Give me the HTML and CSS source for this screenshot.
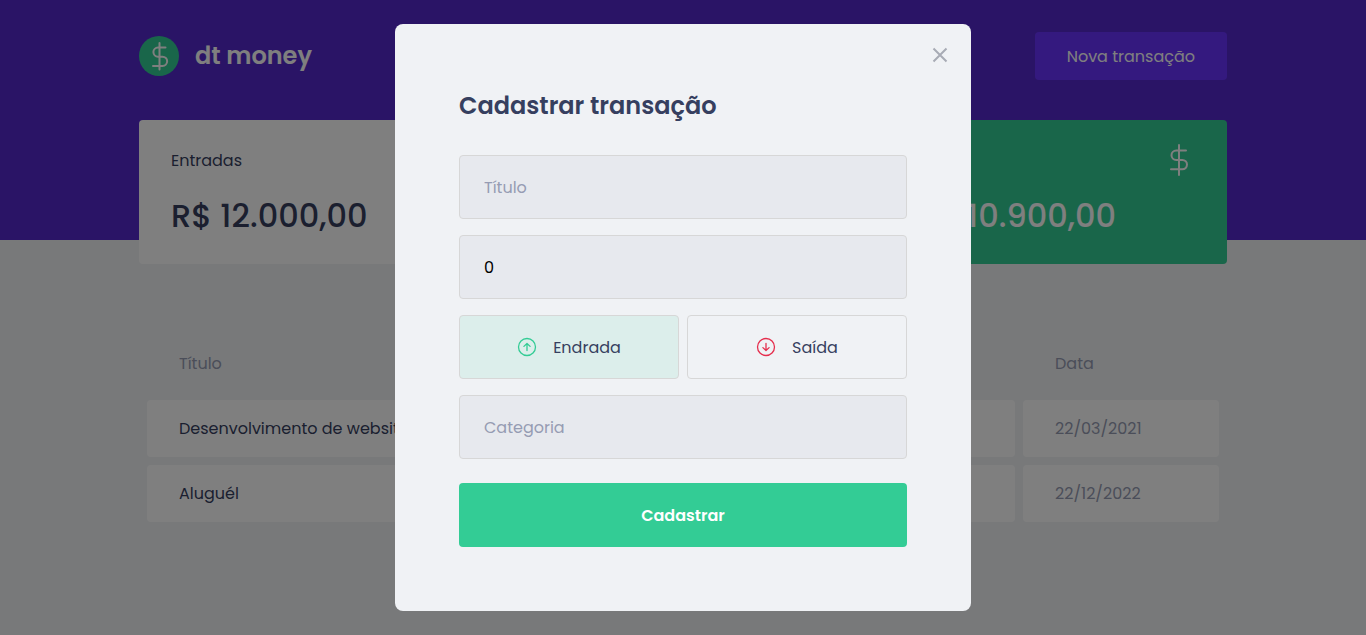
FILE: index.html
```html
<!DOCTYPE html>
<html lang="pt-BR">
<head>
<meta charset="utf-8">
<meta name="viewport" content="width=device-width, initial-scale=1">
<title>dt money</title>
<link rel="stylesheet" href="styles.css">
</head>
<body>
<header class="header">
  <div class="container header-content">
    <div class="logo">
      <svg class="logo-mark" viewBox="0 0 40 40" aria-hidden="true">
        <circle cx="20" cy="20" r="20" fill="#33cc95"/>
        <path d="M20.500 7v26.500M26.500 11.500h-7.500a4.600 4.600 0 0 0 0 9.200h4.500a4.650 4.650 0 0 1 0 9.300h-9.500" fill="none" stroke="#fff" stroke-width="2" stroke-linecap="round"/>
      </svg>
      <span class="logo-name">dt money</span>
    </div>
    <button type="button" class="new-button">Nova transação</button>
  </div>
</header>
<main class="container">
  <section class="summary">
    <article class="card">
      <header class="card-header"><p>Entradas</p></header>
      <strong class="amount">R$ 12.000,00</strong>
    </article>
    <article class="card"></article>
    <article class="card card-total">
      <header class="card-header">
        <p>Total</p>
        <svg class="card-icon" viewBox="0 0 32 32" fill="none" stroke="#fff" stroke-width="2" stroke-linecap="round" aria-hidden="true">
          <path d="M16 1v30M23 6.500h-9.800a4.700 4.700 0 0 0 0 9.400h6.100a4.700 4.700 0 0 1 0 9.400H8"/>
        </svg>
      </header>
      <strong class="amount">R$ 10.900,00</strong>
    </article>
  </section>
  <table class="transactions">
    <thead>
      <tr><th class="col-title">Título</th><th class="col-value"></th><th></th><th class="col-date">Data</th></tr>
    </thead>
    <tbody>
      <tr><td class="title">Desenvolvimento de website</td><td></td><td></td><td>22/03/2021</td></tr>
      <tr><td class="title">Aluguél</td><td></td><td></td><td>22/12/2022</td></tr>
    </tbody>
  </table>
</main>
<div class="overlay">
  <div class="modal" role="dialog" aria-modal="true" aria-labelledby="modal-title">
    <button type="button" class="close" aria-label="Fechar">
      <svg viewBox="0 0 24 24" width="24" height="24" fill="none" stroke="#a8abb5" stroke-width="2" aria-hidden="true"><path d="M5.500 5.500l13 13M18.500 5.500l-13 13"/></svg>
    </button>
    <form class="form">
      <h2 class="modal-title" id="modal-title">Cadastrar transação</h2>
      <input class="field" type="text" placeholder="Título" aria-label="Título">
      <input class="field" type="text" inputmode="decimal" value="0" aria-label="Valor">
      <div class="types">
        <button type="button" class="type type-income" aria-pressed="true">
          <svg class="type-icon" viewBox="0 0 20 20" fill="none" stroke="#33cc95" stroke-width="1.300" stroke-linecap="round" stroke-linejoin="round" aria-hidden="true"><circle cx="10" cy="10" r="8.500"/><path d="M10 13.500V6.700M6.900 9.400L10 6.500l3.100 2.900"/></svg>
          <span>Endrada</span>
        </button>
        <button type="button" class="type" aria-pressed="false">
          <svg class="type-icon" viewBox="0 0 20 20" fill="none" stroke="#e52e4d" stroke-width="1.300" stroke-linecap="round" stroke-linejoin="round" aria-hidden="true"><circle cx="10" cy="10" r="8.500"/><path d="M10 6.500v6.800M6.900 10.600l3.100 2.900 3.100-2.900"/></svg>
          <span>Saída</span>
        </button>
      </div>
      <input class="field" type="text" placeholder="Categoria" aria-label="Categoria">
      <button type="submit" class="submit">Cadastrar</button>
    </form>
  </div>
</div>
</body>
</html>
```
FILE: styles.css
```css
* {
  box-sizing: border-box;
  margin: 0;
  padding: 0;
}

body {
  background: #f0f2f5;
  color: #363f5f;
}

body, button, input {
  font-family: Poppins, Inter, "Open Sans", sans-serif;
  font-size: 16px;
  font-weight: 400;
  line-height: 25px;
}

button {
  border: 0;
  border-radius: 4px;
  cursor: pointer;
}

.container {
  max-width: 1120px;
  margin: 0 auto;
  padding: 0 16px;
}

.header {
  background: #5429cc;
  padding: 32px 0 160px;
}

.header-content {
  display: flex;
  align-items: center;
  justify-content: space-between;
}

.logo {
  display: flex;
  align-items: center;
  gap: 16px;
}

.logo-mark {
  width: 40px;
  height: 40px;
}

.logo-name {
  color: #fff;
  font-size: 24px;
  font-weight: 600;
  line-height: 32px;
}

.new-button {
  height: 48px;
  padding: 0 32px;
  background: #6933ff;
  color: #fff;
}

.summary {
  display: grid;
  grid-template-columns: repeat(3, 1fr);
  gap: 32px;
  margin-top: -120px;
}

.card {
  padding: 24px 32px;
  border-radius: 4px;
  background: #fff;
}

.card-total {
  background: #33cc95;
  color: #fff;
}

.card-header {
  display: flex;
  align-items: center;
  justify-content: space-between;
  min-height: 32px;
}

.card-icon {
  width: 32px;
  height: 32px;
}

.amount {
  display: block;
  margin-top: 16px;
  font-size: 32px;
  font-weight: 500;
  line-height: 48px;
}

.transactions {
  width: 100%;
  margin-top: 64px;
  border-spacing: 8px;
}

.transactions th {
  padding: 16px 32px;
  color: #969cb3;
  font-weight: 400;
  line-height: 24px;
  text-align: left;
}

.transactions td {
  padding: 16px 32px;
  border-radius: 4px;
  background: #fff;
  color: #969cb3;
}

.transactions .title {
  color: #363f5f;
}

.col-title {
  width: 36%;
}

.col-date {
  width: 196px;
}

.overlay {
  position: fixed;
  inset: 0;
  display: flex;
  align-items: center;
  justify-content: center;
  background: rgba(0, 0, 0, 0.5);
}

.modal {
  position: relative;
  width: 100%;
  max-width: 576px;
  padding: 64px;
  border-radius: 8px;
  background: #f0f2f5;
}

.close {
  position: absolute;
  top: 19px;
  right: 19px;
  width: 24px;
  height: 24px;
  background: transparent;
}

.close svg {
  display: block;
}

.form {
  display: flex;
  flex-direction: column;
  gap: 16px;
}

.modal-title {
  margin-bottom: 16px;
  font-size: 24px;
  font-weight: 600;
  line-height: 35px;
}

.field {
  width: 100%;
  height: 64px;
  padding: 0 24px;
  border: 1px solid #d7d7d7;
  border-radius: 4px;
  background: #e7e9ee;
  color: #000;
}

.field::placeholder {
  color: #969cb3;
  opacity: 1;
}

.types {
  display: grid;
  grid-template-columns: 1fr 1fr;
  gap: 8px;
}

.type {
  display: flex;
  align-items: center;
  justify-content: center;
  gap: 16px;
  height: 64px;
  border: 1px solid #d7d7d7;
  background: transparent;
  color: #363f5f;
}

.type-income {
  background: rgba(51, 204, 149, 0.1);
}

.type-icon {
  width: 20px;
  height: 20px;
}

.submit {
  height: 64px;
  margin-top: 8px;
  background: #33cc95;
  color: #fff;
  font-weight: 600;
}
```
